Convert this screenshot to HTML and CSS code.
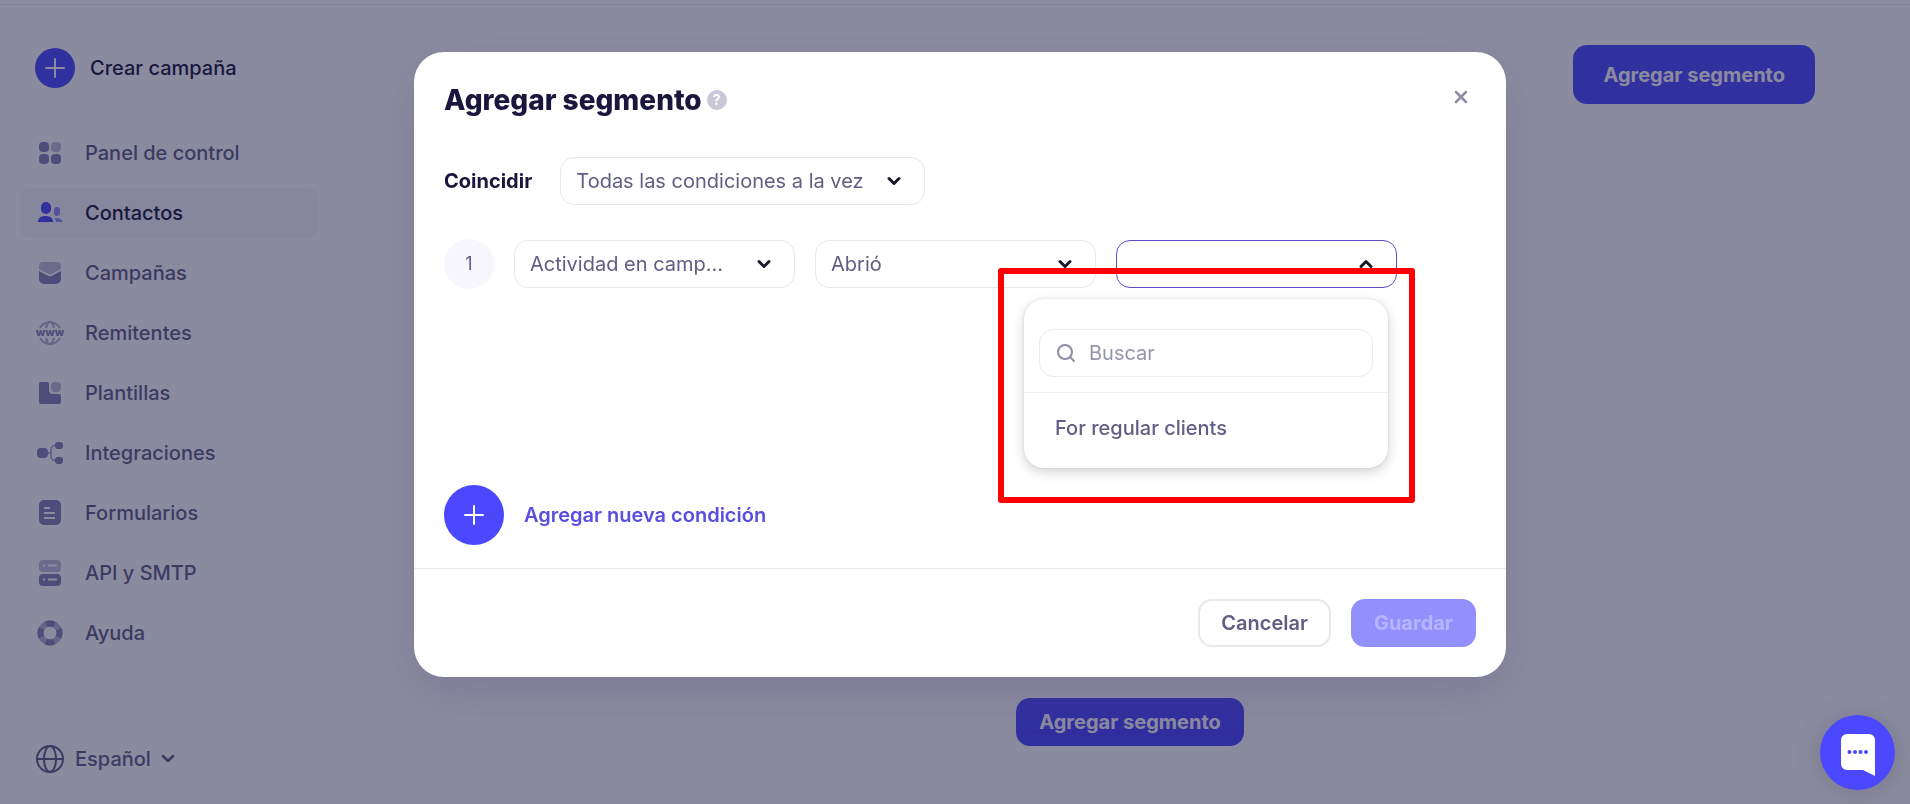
FILE: index.html
```html
<!DOCTYPE html>
<html lang="es">
  <head>
    <meta charset="UTF-8" />
    <meta name="viewport" content="width=device-width, initial-scale=1.0" />
    <title>Agregar segmento</title>
    <link rel="stylesheet" href="styles.css">
  </head>
  <body>
    <div class="topbar"></div>
    <div class="page">
      <aside class="sidebar">
        <a class="create" href="#">
          <span class="create-icon">
            <svg width="20" height="20" viewBox="0 0 20 20" fill="none" stroke="#fff" stroke-width="2" stroke-linecap="round"><path d="M10 1v18M1 10h18" /></svg>
          </span>
          Crear campaña
        </a>

        <nav class="menu">
          <a class="menu-item" href="#">
            <svg width="28" height="28" viewBox="0 0 28 28" fill="currentColor">
              <rect x="3" y="3" width="10" height="10" rx="4" />
              <rect x="15" y="3" width="10" height="10" rx="4" opacity=".5" />
              <rect x="3" y="15" width="10" height="10" rx="4" />
              <rect x="15" y="15" width="10" height="10" rx="4" />
            </svg>
            Panel de control
          </a>
          <a class="menu-item active" href="#">
            <svg width="28" height="28" viewBox="0 0 28 28" fill="currentColor">
              <rect x="5" y="3" width="10" height="12" rx="5" />
              <path d="M2 23c0-4 3-6 7.500-6s7.500 2 7.500 6z" />
              <rect x="18" y="8" width="6" height="9" rx="3" opacity=".6" />
              <path d="M18 19c5-.5 8 .5 8.500 4H20c0-2-.5-3-2-4z" opacity=".6" />
            </svg>
            Contactos
          </a>
          <a class="menu-item" href="#">
            <svg width="28" height="28" viewBox="0 0 28 28" fill="currentColor">
              <path d="M3 7a4 4 0 0 1 4-4h14a4 4 0 0 1 4 4v3l-8.500 4.500a5 5 0 0 1-5 0L3 10z" opacity=".5" />
              <path d="M3 12l8.500 4.500a5 5 0 0 0 5 0L25 12v8a5 5 0 0 1-5 5H8a5 5 0 0 1-5-5z" />
            </svg>
            Campañas
          </a>
          <a class="menu-item" href="#">
            <svg width="28" height="28" viewBox="0 0 28 28" fill="none" stroke="currentColor">
              <g stroke-width="2" opacity=".6">
                <path d="M4 9a11.500 11.500 0 0 1 20 0M4 19a11.500 11.500 0 0 0 20 0" />
                <path d="M10 9c1-4 2.500-6.500 4-6.500S17 5 18 9M10 19c1 4 2.500 6.500 4 6.500s3-2.500 4-6.500" />
              </g>
              <text class="www" x="14" y="17" text-anchor="middle">www</text>
            </svg>
            Remitentes
          </a>
          <a class="menu-item" href="#">
            <svg width="28" height="28" viewBox="0 0 28 28" fill="currentColor">
              <path d="M5 3h6a2 2 0 0 1 2 2v6a4 4 0 0 0 4 4h6a2 2 0 0 1 2 2v6a2 2 0 0 1-2 2H5a2 2 0 0 1-2-2V5a2 2 0 0 1 2-2z" />
              <rect x="15" y="3" width="10" height="10" rx="4" opacity=".5" />
            </svg>
            Plantillas
          </a>
          <a class="menu-item" href="#">
            <svg width="28" height="28" viewBox="0 0 28 28" fill="currentColor">
              <path d="M11 14h4M20 6.500h-1a4 4 0 0 0-4 4v7a4 4 0 0 0 4 4h1" fill="none" stroke="currentColor" stroke-width="2" opacity=".6" />
              <rect x="1" y="9" width="11" height="10" rx="4" />
              <rect x="19" y="3" width="8" height="7" rx="3" />
              <rect x="19" y="18" width="8" height="7" rx="3" />
            </svg>
            Integraciones
          </a>
          <a class="menu-item" href="#">
            <svg width="28" height="28" viewBox="0 0 28 28">
              <rect x="3" y="1" width="22" height="25" rx="5" fill="currentColor" />
              <path d="M9 9h4M9 14h9M9 19h9" fill="none" stroke="#fff" stroke-width="2" stroke-linecap="square" />
            </svg>
            Formularios
          </a>
          <a class="menu-item" href="#">
            <svg width="28" height="28" viewBox="0 0 28 28" fill="currentColor">
              <rect x="3" y="1" width="22" height="12" rx="4" opacity=".5" />
              <rect x="3" y="15" width="22" height="12" rx="4" />
              <path d="M12 6.500h9M12 20.500h9M7 6.500h2M7 20.500h2" stroke="#fff" stroke-width="2" />
            </svg>
            API y SMTP
          </a>
          <a class="menu-item" href="#">
            <svg width="28" height="28" viewBox="0 0 28 28" fill="none" stroke="currentColor" stroke-width="6">
              <circle cx="14" cy="14" r="9.500" opacity=".6" />
              <circle cx="14" cy="14" r="9.500" stroke-dasharray="8.500 6.423" stroke-dashoffset="4.250" />
            </svg>
            Ayuda
          </a>
        </nav>

        <button type="button" class="language">
          <svg width="30" height="30" viewBox="0 0 30 30" fill="none" stroke="currentColor" stroke-width="2">
            <circle cx="15" cy="15" r="13" />
            <ellipse cx="15" cy="15" rx="6" ry="13" />
            <path d="M2 15h26" />
          </svg>
          Español
          <svg width="14" height="14" viewBox="0 0 14 14" fill="none" stroke="currentColor" stroke-width="2.500" stroke-linecap="round" stroke-linejoin="round"><path d="M2 4l5 5 5-5" /></svg>
        </button>
      </aside>

      <main class="content">
        <button type="button" class="btn btn-primary btn-large">Agregar segmento</button>
        <div class="empty">
          <button type="button" class="btn btn-primary">Agregar segmento</button>
        </div>
      </main>
    </div>

    <div class="overlay">
      <form class="modal" role="dialog" aria-labelledby="modal-title">
        <div class="modal-body">
          <div class="modal-header">
            <h1 id="modal-title">Agregar segmento</h1>
            <button type="button" class="help" aria-label="Información">?</button>
            <button type="button" class="close" aria-label="Cerrar">
              <svg width="14" height="14" viewBox="0 0 14 14" fill="none" stroke="currentColor" stroke-width="2.500" stroke-linecap="round"><path d="M2 2l10 10M12 2L2 12" /></svg>
            </button>
          </div>

          <div class="match">
            <label for="match">Coincidir</label>
            <div class="select select-match">
              <select id="match">
                <option>Todas las condiciones a la vez</option>
              </select>
              <svg class="arrow" width="14" height="14" viewBox="0 0 14 14"><path d="M2 4.500l5 5 5-5" /></svg>
            </div>
          </div>

          <div class="conditions">
            <div class="condition">
              <span class="number">1</span>
              <div class="select">
                <select aria-label="Tipo">
                  <option>Actividad en camp...</option>
                </select>
                <svg class="arrow" width="14" height="14" viewBox="0 0 14 14"><path d="M2 4.500l5 5 5-5" /></svg>
              </div>
              <div class="select">
                <select aria-label="Acción">
                  <option>Abrió</option>
                </select>
                <svg class="arrow" width="14" height="14" viewBox="0 0 14 14"><path d="M2 4.500l5 5 5-5" /></svg>
              </div>
              <div class="select open">
                <select aria-label="Campaña">
                  <option></option>
                </select>
                <svg class="arrow" width="14" height="14" viewBox="0 0 14 14"><path d="M2 9.500l5-5 5 5" /></svg>
                <div class="dropdown">
                  <div class="dropdown-search">
                    <label class="search">
                      <svg width="20" height="20" viewBox="0 0 20 20" fill="none" stroke="currentColor" stroke-width="2" stroke-linecap="round"><circle cx="9" cy="9" r="7" /><path d="M14 14l4 4" /></svg>
                      <input type="text" placeholder="Buscar" aria-label="Buscar" />
                    </label>
                  </div>
                  <button type="button" class="dropdown-item">For regular clients</button>
                </div>
                <div class="highlight"></div>
              </div>
            </div>
          </div>

          <button type="button" class="add">
            <span class="add-icon">
              <svg width="20" height="20" viewBox="0 0 20 20" fill="none" stroke="#fff" stroke-width="2" stroke-linecap="round"><path d="M10 1v18M1 10h18" /></svg>
            </span>
            Agregar nueva condición
          </button>
        </div>

        <div class="modal-footer">
          <button type="button" class="btn btn-cancel">Cancelar</button>
          <button type="submit" class="btn btn-save" disabled>Guardar</button>
        </div>
      </form>
    </div>

    <button type="button" class="chat" aria-label="Chat">
      <svg width="36" height="44" viewBox="0 0 36 44">
        <path d="M7 1h22a6 6 0 0 1 6 6v36l-12-6H7a6 6 0 0 1-6-6V7a6 6 0 0 1 6-6z" fill="#fff" />
        <g fill="#4b48ff"><circle cx="9.500" cy="19" r="2" /><circle cx="15" cy="19" r="2" /><circle cx="20.500" cy="19" r="2" /><circle cx="26" cy="19" r="2" /></g>
      </svg>
    </button>
  </body>
</html>
```
FILE: styles.css
```css
* {
  box-sizing: border-box;
}
body {
  display: flex;
  flex-direction: column;
  min-height: 100vh;
  margin: 0;
  font-family: Inter, "Liberation Sans", sans-serif;
  font-size: 20px;
  line-height: 24px;
  color: #5f5e84;
  background: #fff;
}
button,
input,
select {
  font: inherit;
  color: inherit;
}
button {
  padding: 0;
  border: none;
  background: none;
  cursor: pointer;
}
a {
  color: inherit;
  text-decoration: none;
}
svg {
  flex-shrink: 0;
}

/* page */
.topbar {
  height: 5px;
  border-bottom: 1px solid #e8e8ed;
}
.page {
  display: flex;
  flex: 1;
}
.sidebar {
  display: flex;
  flex-direction: column;
  width: 350px;
  padding: 43px 32px 30px 20px;
  font-weight: 500;
}
.create {
  display: flex;
  align-items: center;
  gap: 15px;
  padding-left: 15px;
  color: #19173d;
}
.create-icon,
.add-icon {
  display: flex;
  align-items: center;
  justify-content: center;
  width: 40px;
  height: 40px;
  border-radius: 50%;
  background: #4b48ff;
}
.menu {
  display: flex;
  flex-direction: column;
  gap: 10px;
  margin-top: 40px;
}
.menu-item {
  display: flex;
  align-items: center;
  gap: 21px;
  height: 50px;
  padding-left: 16px;
  border-radius: 10px;
}
.menu-item svg {
  color: #8480b0;
}
.menu-item.active {
  color: #19173d;
  background: #f4f4fb;
}
.menu-item.active svg {
  color: #4b48ff;
}
.www {
  font-size: 11px;
  font-weight: 800;
  fill: currentColor;
  stroke: none;
}
.language {
  display: flex;
  align-items: center;
  gap: 10px;
  margin-top: auto;
  padding-left: 15px;
}
.content {
  display: flex;
  flex: 1;
  flex-direction: column;
}
.empty {
  display: flex;
  justify-content: center;
  margin-top: auto;
  padding-bottom: 58px;
}

/* buttons */
.btn {
  height: 48px;
  padding: 0 23px;
  border-radius: 14px;
  font-weight: 700;
}
.btn-primary {
  color: #fff;
  background: #4b48ff;
}
.btn-large {
  align-self: flex-end;
  height: 59px;
  margin: 40px 95px 0 0;
  padding: 0 30px;
}
.btn-cancel {
  padding: 0 21px;
  border: 2px solid #e8e8ed;
  font-weight: 600;
}
.btn-save {
  color: #b7b5ff;
  background: #9290fc;
}

/* modal */
.overlay {
  position: fixed;
  inset: 0;
  padding: 52px 20px 20px 30px;
  overflow: auto;
  background: rgba(24, 24, 64, 0.5);
}
.modal {
  max-width: 1092px;
  margin: 0 auto;
  border-radius: 30px;
  background: #fff;
  box-shadow: 0 16px 50px rgba(70, 60, 120, 0.2);
}
.modal-body {
  padding: 30px 30px 23px;
}
.modal-header {
  display: flex;
  align-items: center;
}
h1 {
  margin: 0;
  font-size: 28px;
  line-height: 36px;
  font-weight: 800;
  color: #19173d;
}
.help {
  width: 20px;
  height: 20px;
  margin-left: 5px;
  border-radius: 50%;
  font-size: 14px;
  line-height: 20px;
  font-weight: 700;
  color: #fff;
  background: #c9c8d8;
}
.close {
  display: flex;
  align-self: flex-start;
  margin-left: auto;
  padding: 8px;
  color: #8e8da8;
}
.match {
  display: flex;
  align-items: center;
  gap: 28px;
  margin-top: 39px;
}
.match label {
  font-weight: 700;
  color: #19173d;
}
.select {
  position: relative;
  flex: 0 1 281px;
}
.select-match {
  flex-basis: 365px;
}
.select select {
  display: block;
  width: 100%;
  height: 48px;
  padding: 0 48px 0 15px;
  border: 1px solid #e8e8ed;
  border-radius: 14px;
  background: #fff;
  appearance: none;
}
.select.open select {
  border-color: #5b4fd0;
}
.arrow {
  position: absolute;
  top: 17px;
  right: 24px;
  fill: none;
  stroke: #1b1a2b;
  stroke-width: 2px;
  stroke-width: 3px;
  stroke-linecap: round;
  stroke-linejoin: round;
  pointer-events: none;
}
.conditions {
  min-height: 280px;
  padding-top: 34px;
}
.condition {
  display: flex;
  align-items: center;
  gap: 20px;
}
.number {
  flex-shrink: 0;
  width: 50px;
  height: 50px;
  border-radius: 50%;
  font-size: 18px;
  line-height: 50px;
  text-align: center;
  background: #f7f6fd;
}
.add {
  display: flex;
  align-items: center;
  gap: 20px;
  font-weight: 600;
  color: #5a4ee0;
}
.add-icon {
  width: 60px;
  height: 60px;
}
.modal-footer {
  display: flex;
  justify-content: flex-end;
  gap: 20px;
  padding: 30px;
  border-top: 1px solid #e8e8ed;
}

/* open list of the third select */
.dropdown {
  position: absolute;
  top: 59px;
  right: 9px;
  width: 364px;
  border-radius: 20px;
  background: #fff;
  box-shadow: 0 4px 12px rgba(25, 35, 50, 0.2), 0 0 2px rgba(25, 35, 50, 0.15);
}
.dropdown-search {
  padding: 30px 15px 15px;
  border-bottom: 1px solid #f0f0f4;
}
.search {
  display: flex;
  align-items: center;
  gap: 13px;
  height: 48px;
  padding: 0 16px;
  border: 1px solid #ececf1;
  border-radius: 14px;
  color: #8e8da8;
}
.search input {
  flex: 1;
  min-width: 0;
  padding: 0;
  border: none;
  outline: none;
  background: none;
}
.search input::placeholder {
  color: #9594ad;
  opacity: 1;
}
.dropdown-item {
  display: block;
  width: 100%;
  padding: 23px 31px 28px;
  font-weight: 500;
  text-align: left;
}
.highlight {
  position: absolute;
  top: 28px;
  right: -18px;
  width: 417px;
  height: 235px;
  border: 6px solid #f00;
  border-radius: 3px;
  pointer-events: none;
}

/* chat */
.chat {
  position: fixed;
  right: 15px;
  bottom: 14px;
  display: flex;
  align-items: center;
  justify-content: center;
  width: 75px;
  height: 75px;
  padding-top: 4px;
  border-radius: 50%;
  background: #4b48ff;
  box-shadow: 0 2px 24px rgba(80, 80, 100, 0.3);
}
```
